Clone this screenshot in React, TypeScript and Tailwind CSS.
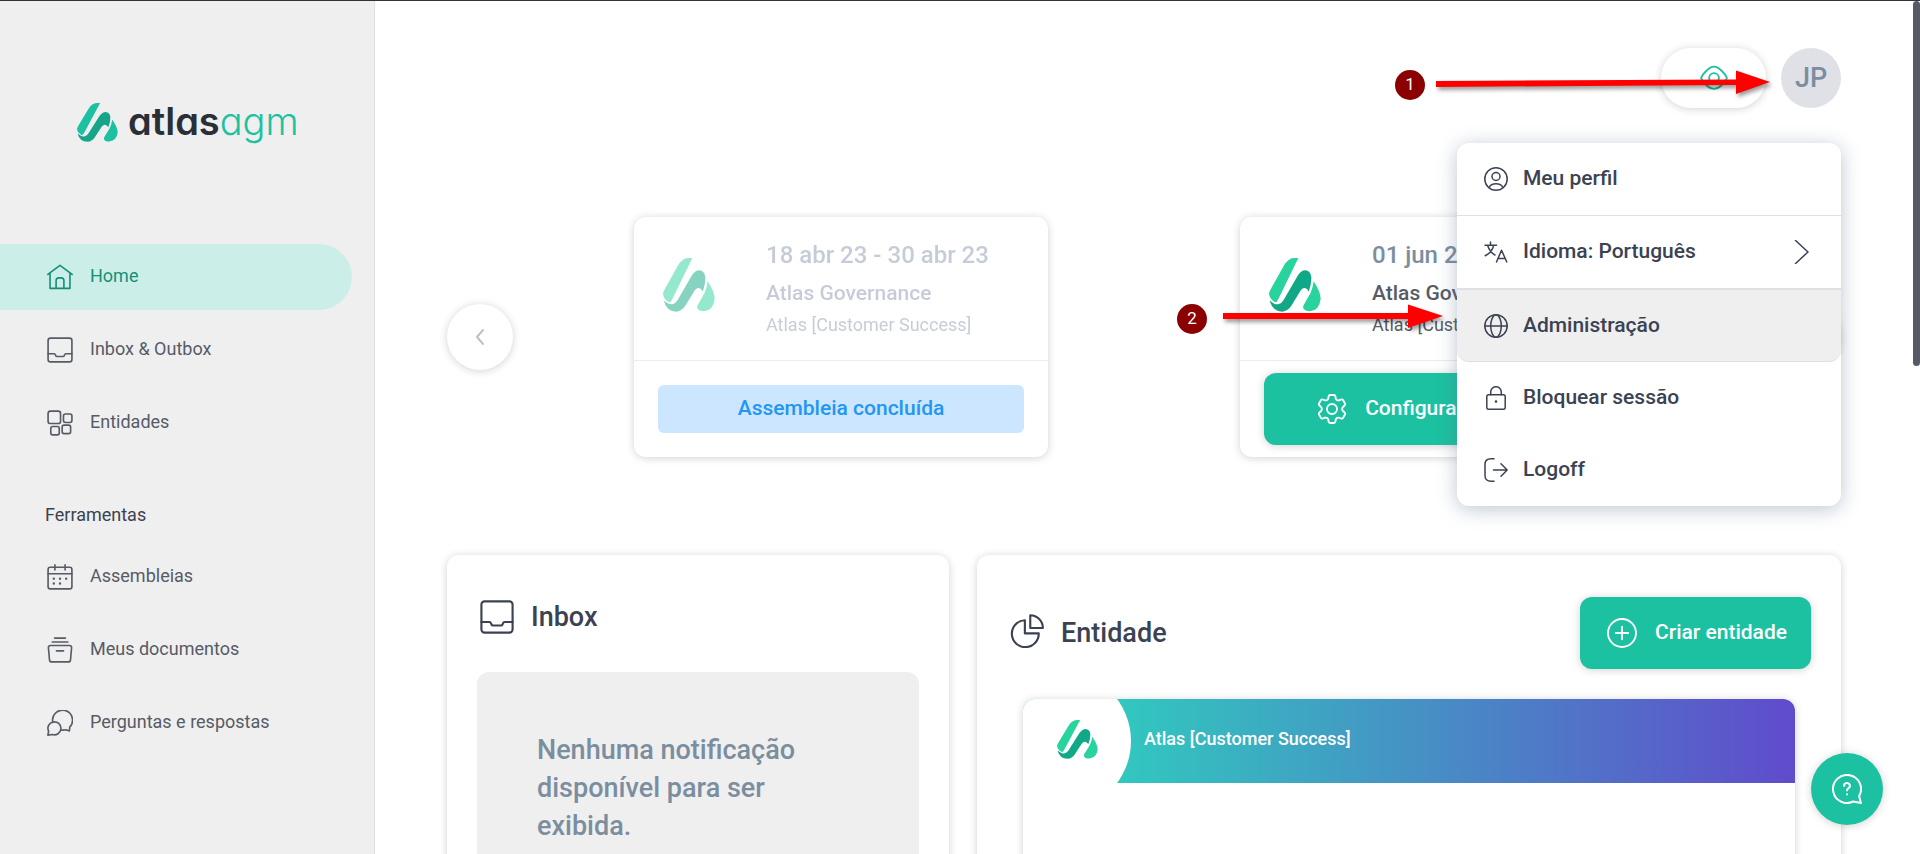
import React from "react";

const BrandMark = ({ className, light, dark }: { className: string; light: string; dark: string }) => (
  <svg viewBox="0 0 156 162" preserveAspectRatio="none" className={className} aria-hidden="true">
    <path fill={light} d="M0 108 Q1 101 5 94 L44 24 Q58 -1 78 0 H88 L27 125 Q24 133 18 133 Q2 124 0 108Z" />
    <path fill={dark} d="M2 127 Q18 142 30 138 Q38 136 44 126 L86 53 Q97 37 109 37 Q125 38 127 58 Q128 76 119 101 Q114 89 105 90 Q98 91 94 99 L68 142 Q57 160 40 161 Q10 161 2 127Z" />
    <path fill={light} d="M134 70 Q154 100 155 122 Q151 157 123 160 Q105 160 102 148 Q103 141 108 134 L125 104 Q132 88 134 70Z" />
  </svg>
);

type IconProps = { className?: string; width?: number };
const makeIcon = (children: React.ReactNode) =>
  ({ className = "size-[26px]", width = 1.5 }: IconProps) => (
    <svg viewBox="0 0 24 24" fill="none" stroke="currentColor" strokeWidth={width} strokeLinecap="round" strokeLinejoin="round" className={`shrink-0 ${className}`} aria-hidden="true">
      {children}
    </svg>
  );

const HomeIcon = makeIcon(<><path d="M.8 9.600 12 1.200l11.200 8.400M2.800 8.300v14.200h18.400V8.300" /><path d="M8.400 22.300v-7a2.500 2.500 0 0 1 2.500-2.500h2.200a2.500 2.500 0 0 1 2.500 2.500v7" /></>);
const InboxIcon = makeIcon(<><rect x="1" y="1" width="22" height="22" rx="2.200" /><path d="M1 15.500h5.500q1 0 1.300 1l.2.500q.3 1 1.300 1h5.400q1 0 1.300-1l.2-.5q.3-1 1.300-1H23" /></>);
const EntitiesIcon = makeIcon(<><rect x="1" y="1" width="11.500" height="11.500" rx="2.200" /><rect x="15.200" y="3.700" width="7.800" height="7.800" rx="1.800" /><rect x="3.500" y="15.200" width="7.800" height="7.800" rx="1.800" /><rect x="14" y="14" width="7.800" height="7.800" rx="1.800" /></>);
const CalendarIcon = makeIcon(<><rect x="1" y="3" width="22" height="20" rx="2" /><path d="M1 9h22M7.300 .8v4.700M16.700 .8v4.700" /><path strokeWidth="2.200" d="M6.300 13.500h.01M12 13.500h.01M17.700 13.500h.01M6.300 18h.01M12 18h.01" /></>);
const DocsIcon = makeIcon(<><path d="M7 1h10M4.800 4.600h14.400M3.200 7.800h17.600a1.900 1.900 0 0 1 1.900 2.100l-1 11.200a2 2 0 0 1-2 1.900H4.300a2 2 0 0 1-2-1.900l-1-11.200a1.900 1.900 0 0 1 1.900-2.100ZM8.700 12.800h6.600" /></>);
const ChatIcon = makeIcon(<><path d="M5.400 11.500A9.200 9.200 0 1 1 21 15.700l-.3 3.700-3.300-1.200a9.200 9.200 0 0 1-4.600.2" /><path d="M.8 23.200l.7-3.600a6 6 0 1 1 3.400 3Z" /></>);
const UserIcon = makeIcon(<><circle cx="12" cy="12" r="11.200" /><circle cx="12" cy="9.500" r="4" /><path d="M5 20.500q2-3.700 7-3.700t7 3.700" /></>);
const LanguageIcon = makeIcon(<><path d="M1 5.200h11.500M6.500 2v3M9.700 5.300Q8 12.500 1.200 15.700M3.500 5.300Q6 12.500 11 15" /><path d="M12.500 22l5-11.800 5.300 11.800M14 18.500h7.200" /></>);
const GlobeIcon = makeIcon(<><circle cx="12" cy="12" r="11.200" /><ellipse cx="12" cy="12" rx="5.300" ry="11.200" /><path d="M.8 12h22.400" /></>);
const LockIcon = makeIcon(<><rect x="2.800" y="8.800" width="18.400" height="14.500" rx="1.800" /><path d="M6.700 8.800V6a5.300 5.300 0 0 1 10.600 0v2.800" /><path strokeWidth="2.600" d="M12 15.500h.01" /></>);
const LogoutIcon = makeIcon(<path d="M10 .8H7Q1 .8 1 6.500v11Q1 23.200 7 23.200h3M9.500 12h13.700M17 5.800l6.200 6.200-6.200 6.200" />);
const ChevronRight = makeIcon(<path d="M5.500 .5 18 12 5.500 23.500" />);
const ChevronLeft = makeIcon(<path d="M15 5l-6 7 6 7" />);
const EyeIcon = makeIcon(<><path d="M.9 12Q2 9 5.500 5.800 9 2.300 12 2.300t6.500 3.500Q22 9 23.100 12 22 15 18.500 18.200 15 21.300 12 21.300t-6.500-3.100Q2 15 .9 12Z" /><circle cx="12" cy="12" r="4.200" /></>);
const GearIcon = makeIcon(<><path d="M9.300 1.900Q9.500.8 10.500.8h3q1 0 1.200 1.100l.3 1.700q.2.900 1.100 1.300t1.700.1l1.500-.6q1-.4 1.600.6l1.500 2.600q.5 1-.3 1.600l-1.300 1.200q-.7.600-.7 1.600t.7 1.600l1.300 1.200q.8.600.3 1.600l-1.500 2.600q-.6 1-1.600.6l-1.500-.6q-.8-.3-1.700.1t-1.100 1.300l-.3 1.700q-.2 1.100-1.200 1.100h-3q-1 0-1.200-1.100L9 20.400q-.2-.9-1.100-1.300t-1.700-.1l-1.500.6q-1 .4-1.600-.6l-1.500-2.600q-.5-1 .3-1.600l1.300-1.200q.7-.6.700-1.600t-.7-1.600L1.900 9.200q-.8-.6-.3-1.600L3.100 5q.6-1 1.600-.6l1.500.6q.8.300 1.700-.1T9 3.600Z" /><circle cx="12" cy="12" r="4" /></>);
const PieIcon = makeIcon(<><path d="M10.500 4.400a9.500 9.500 0 1 0 9.800 9.300h-9.800Z" /><path d="M14.300 .9v9h8.900a9 9 0 0 0-8.900-9Z" /></>);
const PlusIcon = makeIcon(<><circle cx="12" cy="12" r="11.200" /><path d="M12 7v10M7 12h10" /></>);
const HelpIcon = makeIcon(<><path d="M21.700 17.600A11.200 11.200 0 1 0 17 22l6.100 1.200Z" /><path d="M9.700 9.500a2.300 2.300 0 1 1 3.300 2q-1 .6-1 1.700M12 16.300v.1" /></>);

type Icon = (p: IconProps) => React.ReactElement;

const NavItem = ({ icon: I, label, active = false }: { icon: Icon; label: string; active?: boolean }) => (
  <a
    href="#"
    aria-current={active ? "page" : undefined}
    className={`mr-[22px] flex h-[66px] items-center gap-[17px] rounded-r-full pl-[47px] text-lg ${active ? "bg-[#cceee8] text-[#178f78]" : "text-[#565b66]"}`}
  >
    <I />
    <span className="pb-0.5">{label}</span>
  </a>
);

const cardShadow = "shadow-[0_1px_8px_rgba(0,0,0,0.18)]";

const Assembly = ({ date, faded = false, children }: { date: string; faded?: boolean; children: React.ReactNode }) => (
  <article className={`flex h-60 w-[414px] shrink-0 flex-col rounded-xl bg-white ${cardShadow}`}>
    <div className="flex h-36 border-b border-[#ececee]">
      <div className={`flex items-start gap-[51px] pl-[29px] ${faded ? "opacity-50" : ""}`}>
        <BrandMark className="mt-[41px] h-[54px] w-[52px] shrink-0" light="#29d39d" dark="#10a886" />
        <div className="pt-[22px] whitespace-nowrap">
          <p className={`text-2xl leading-8 font-medium ${faded ? "text-[#8e9bb0]" : "text-[#7b8ea0]"}`}>{date}</p>
          <p className={`mt-2 text-[21px] leading-7 font-medium ${faded ? "text-[#8e9bb0]" : "text-[#565b66]"}`}>Atlas Governance</p>
          <p className={`mt-1 text-lg leading-7 ${faded ? "text-[#8e9bb0]" : "text-[#565b66]"}`}>Atlas [Customer Success]</p>
        </div>
      </div>
    </div>
    <div className="flex flex-1 items-center px-6">{children}</div>
  </article>
);

const MenuItem = ({ icon: I, label, className = "", arrow = false }: { icon: Icon; label: string; className?: string; arrow?: boolean }) => (
  <button type="button" role="menuitem" className={`flex w-full items-center gap-[15px] pr-[27px] pl-[27px] text-left text-[21px] font-medium ${className}`}>
    <I className="size-6" width={1.5} />
    <span className="flex-1">{label}</span>
    {arrow && <ChevronRight className="size-6" width={1.5} />}
  </button>
);

const Callout = ({ number, className, length, path }: { number: number; className: string; length: number; path: string }) => (
  <div className={`absolute z-20 flex items-center ${className}`}>
    <span className="flex size-[30px] items-center justify-center rounded-full bg-[#8b0000] text-[17px] text-white">{number}</span>
    <svg width={length} height="24" viewBox={`0 0 ${length} 24`} className="overflow-visible drop-shadow-[2px_3px_2px_rgba(0,0,0,0.4)]" aria-hidden="true">
      <path fill="#f00" d={path} />
    </svg>
  </div>
);

export default function App() {
  return (
    <div className="relative flex h-screen overflow-hidden border-t border-[#333] bg-white font-['Roboto',sans-serif] text-[#3b4252]">
      <aside className="w-[375px] shrink-0 border-r border-[#dfe0e6] bg-[#efefef]">
        <a href="#" aria-label="atlas agm" className="mt-[93px] ml-[77px] flex h-14 items-center gap-[10px]">
          <BrandMark className="h-[39px] w-[41px]" light="#1bc1a1" dark="#17a589" />
          <span className="pb-0.5 font-['Inter',sans-serif] text-[38px] leading-none font-semibold text-[#2a2e37] [font-feature-settings:'cv11']">
            atlas<span className="font-light text-[#1bc1a1]">agm</span>
          </span>
        </a>
        <nav className="mt-[94px] flex flex-col gap-[7px]">
          <NavItem icon={HomeIcon} label="Home" active />
          <NavItem icon={InboxIcon} label="Inbox & Outbox" />
          <NavItem icon={EntitiesIcon} label="Entidades" />
          <h2 className="mt-[38px] mb-2 pl-[45px] text-lg leading-7">Ferramentas</h2>
          <NavItem icon={CalendarIcon} label="Assembleias" />
          <NavItem icon={DocsIcon} label="Meus documentos" />
          <NavItem icon={ChatIcon} label="Perguntas e respostas" />
        </nav>
      </aside>

      <main className="mr-[7px] min-w-0 flex-1 px-[72px] pt-[47px]">
        <header className="relative flex justify-end gap-[15px]">
          <button type="button" aria-label="Visualizar" className={`flex h-[60px] w-[105px] items-center justify-center rounded-full bg-white text-[#1bc1a1] ${cardShadow}`}>
            <EyeIcon className="size-7" width={1.6} />
          </button>
          <button type="button" aria-label="Conta" className="size-[60px] rounded-full bg-[#e0e1e7] text-[27px] font-medium text-[#7b8ea0]">JP</button>

          <div role="menu" className="absolute top-[95px] right-0 z-10 w-96 rounded-xl bg-white shadow-[0_3px_20px_rgba(90,110,140,0.4)]">
            <MenuItem icon={UserIcon} label="Meu perfil" className="h-[73px] border-b border-[#dfe0e6]" />
            <MenuItem icon={LanguageIcon} label="Idioma: Português" arrow className="h-[73px] border-b border-[#dfe0e6]" />
            <MenuItem icon={GlobeIcon} label="Administração" className="h-[73px] rounded-b-xl border-y border-[#dfe0e6] bg-[#efefef]" />
            <MenuItem icon={LockIcon} label="Bloquear sessão" className="h-[72px]" />
            <MenuItem icon={LogoutIcon} label="Logoff" className="h-[72px]" />
          </div>
        </header>

        <section aria-label="Assembleias" className="mt-[109px] flex items-center gap-[25px]">
          <button type="button" aria-label="Anterior" className={`flex size-[66px] shrink-0 items-center justify-center rounded-full bg-white text-[#b9c1cd] ${cardShadow}`}>
            <ChevronLeft className="size-6" width={2} />
          </button>
          <div className="grid flex-1 grid-cols-2 justify-items-center">
            <Assembly date="18 abr 23 - 30 abr 23" faded>
              <p className="flex h-12 w-full items-center justify-center rounded-md bg-[#cce6ff] text-[21px] font-medium text-[#2196f3]">Assembleia concluída</p>
            </Assembly>
            <Assembly date="01 jun 23 - 30 jun 23">
              <button type="button" className={`flex h-[72px] w-full items-center justify-center gap-[18px] rounded-xl bg-[#1bc1a1] text-[21px] font-medium text-white ${cardShadow}`}>
                <GearIcon className="size-[30px]" />
                Configurar assembleia
              </button>
            </Assembly>
          </div>
          <button type="button" aria-label="Próximo" className={`flex size-[66px] shrink-0 items-center justify-center rounded-full bg-white ${cardShadow}`}>
            <ChevronRight className="size-5" />
          </button>
        </section>

        <div className="mt-[98px] grid grid-cols-[502fr_864fr] gap-7">
          <section className={`h-[480px] rounded-xl bg-white px-[30px] pt-10 ${cardShadow}`}>
            <div className="flex h-11 items-center gap-[17px] pl-[3px]">
              <InboxIcon className="size-[34px]" />
              <h2 className="text-[27px] font-medium">Inbox</h2>
            </div>
            <div className="mt-[33px] h-80 rounded-xl bg-[#efefef] px-[60px] pt-[59px]">
              <p className="text-[27px] leading-[38px] font-medium text-[#7b8ea0]">Nenhuma notificação disponível para ser exibida.</p>
            </div>
          </section>

          <section className={`h-[480px] rounded-xl bg-white pt-[42px] pr-[30px] pl-[33px] ${cardShadow}`}>
            <div className="flex items-center gap-[17px]">
              <PieIcon className="mb-1 size-[34px]" />
              <h2 className="flex-1 text-[27px] font-medium">Entidade</h2>
              <button type="button" className={`flex h-[72px] items-center gap-[18px] rounded-xl bg-[#1bc1a1] pr-6 pl-[27px] text-[21px] font-medium text-white ${cardShadow}`}>
                <PlusIcon className="size-[30px]" />
                Criar entidade
              </button>
            </div>
            <div className={`mt-[30px] mr-4 ml-[13px] h-80 overflow-hidden rounded-xl bg-white ${cardShadow}`}>
              <div className="relative flex h-[84px] items-center gap-[46px] overflow-hidden bg-linear-to-r/srgb from-[#2bd9bd] to-[#604bcc] pb-1 pl-[34px]">
                <span className="absolute top-[-28px] left-[-32px] size-[140px] rounded-r-full bg-white" />
                <BrandMark className="relative h-[39px] w-[41px]" light="#29d39d" dark="#10a886" />
                <h3 className="relative text-lg font-medium text-white">Atlas [Customer Success]</h3>
              </div>
            </div>
          </section>
        </div>
      </main>

      <button type="button" aria-label="Ajuda" className={`absolute right-[37px] bottom-[29px] flex size-[72px] items-center justify-center rounded-full bg-[#1bc1a1] text-white ${cardShadow}`}>
        <HelpIcon className="size-[30px]" width={1.6} />
      </button>
      <div className="absolute top-0 right-0 h-[365px] w-[7px] rounded-full bg-[#565a64]" />

      <Callout number={1} className="top-[69px] right-[150px] gap-[11px]" length={334} path="M0 8 300 6.500V-2.500L334 9 300 21V12L0 14Z" />
      <Callout number={2} className="top-[303px] right-[477px] gap-4" length={220} path="M0 6H185V-2.500L220 9 185 21V12H0Z" />
    </div>
  );
}
